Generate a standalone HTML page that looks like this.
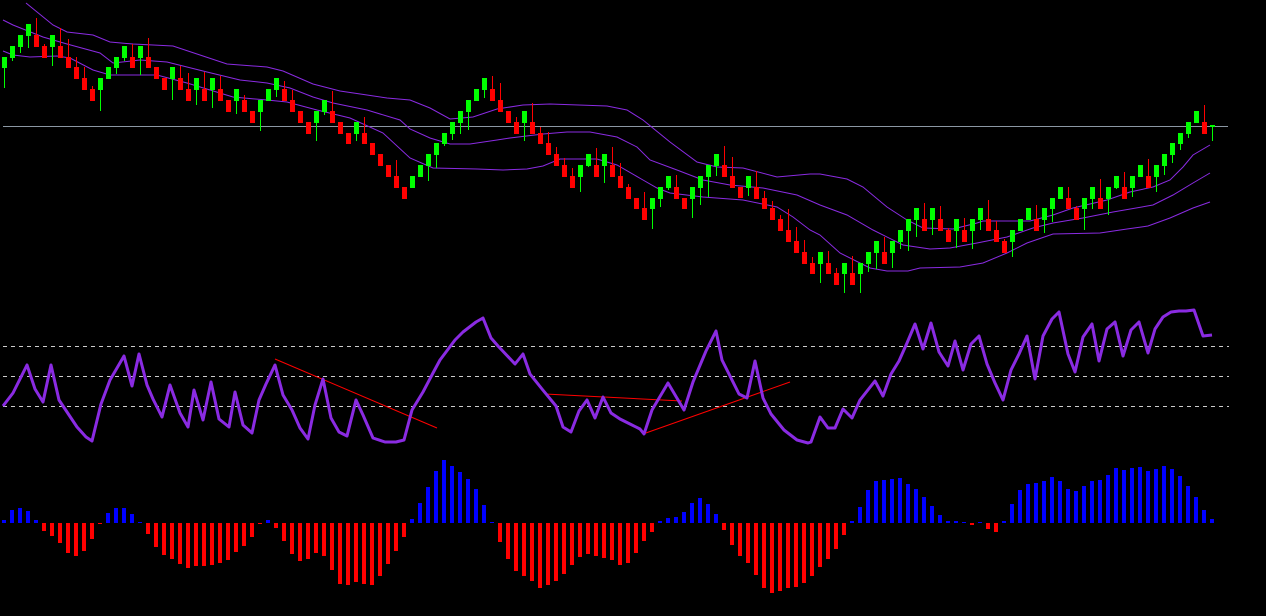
<!DOCTYPE html>
<html><head><meta charset="utf-8"><style>
html,body{margin:0;padding:0;background:#000;width:1266px;height:616px;overflow:hidden}
svg{display:block}
</style></head><body>
<svg id="s" width="1266" height="616" xmlns="http://www.w3.org/2000/svg" shape-rendering="crispEdges">
<rect width="1266" height="616" fill="#000"/>
<line x1="3" y1="126.5" x2="1228" y2="126.5" stroke="#8b97a3" stroke-width="1"/>
<g fill="none" stroke="#8a2be2" stroke-width="1" shape-rendering="auto">
<polyline points="26,3 53,25 67,32 93,35 110,42 133,44 173,46 200,55 227,64 267,67 283,71 313,84 340,91 367,95 387,98 410,100 430,108 450,119 473,117 497,109 523,105 550,104 607,106 627,110 643,120 670,142 697,162 717,167 743,168 777,177 810,174 820,174 847,179 863,187 887,207 907,220 923,228 953,229 977,223 983,221 1030,221 1053,215 1073,208 1107,200 1130,192 1153,187 1170,180 1183,167 1193,155 1210,145"/>
<polyline points="3,20 13,25 43,37 67,44 100,53 113,63 140,60 167,62 207,72 240,80 267,83 290,88 313,97 333,103 367,110 400,120 410,129 430,138 450,144 470,144 497,140 510,138 543,134 567,132 590,132 617,137 637,147 650,160 677,170 703,180 730,185 763,188 797,195 820,205 847,215 873,230 903,245 930,249 950,248 977,243 1007,237 1033,228 1053,223 1083,218 1113,212 1153,205 1173,195 1193,183 1210,173"/>
<polyline points="3,51 13,55 30,57 57,56 70,58 93,70 110,75 133,75 157,75 187,83 233,97 267,100 287,102 317,110 350,118 383,133 410,158 433,168 477,169 503,170 527,169 543,166 560,159 597,159 617,165 643,180 657,188 670,193 703,197 743,200 777,207 793,217 810,230 820,235 840,253 870,268 887,271 908,271 920,268 960,267 983,263 1007,253 1027,243 1053,234 1100,233 1127,229 1148,226 1170,218 1193,208 1210,202"/>
</g>
<g id="candles"></g>
<g stroke="#cccccc" stroke-width="1" stroke-dasharray="4,4">
<line x1="3" y1="346.5" x2="1229" y2="346.5"/>
<line x1="3" y1="376.5" x2="1229" y2="376.5"/>
<line x1="3" y1="406.5" x2="1229" y2="406.5"/>
</g>
<g stroke="#ff0000" stroke-width="1" shape-rendering="auto">
<line x1="275" y1="359" x2="437" y2="428"/>
<line x1="545" y1="394" x2="682" y2="401"/>
<line x1="643" y1="434" x2="790" y2="382"/>
</g>
<polyline fill="none" stroke="#8a2be2" stroke-width="3" stroke-linejoin="round" shape-rendering="auto" points="3,406 13,393 27,365 35,389 43,402 51,365 59,400 67,412 77,427 86,437 92,441 101,404 110,380 124,356 132,386 139,354 147,385 153,399 162,417 170,385 180,413 188,427 194,390 203,420 211,382 219,419 229,427 235,392 243,425 252,433 259,400 266,384 275,365 283,395 292,410 300,428 308,439 315,405 323,379 331,418 339,432 347,436 356,400 363,415 373,438 385,442 396,442 404,440 412,410 423,392 433,373 440,360 455,340 463,332 476,322 483,318 491,338 498,346 515,364 523,354 530,374 542,389 556,406 563,427 571,432 579,411 587,400 595,418 603,397 611,413 620,419 630,424 640,429 644,434 652,410 668,383 684,410 693,382 706,351 716,331 722,360 739,394 747,398 755,361 763,398 771,414 784,430 797,440 808,443 811,442 820,417 828,428 835,428 843,409 852,418 860,400 875,381 883,396 891,374 899,361 907,343 915,324 923,349 931,323 939,352 948,366 955,341 963,370 971,344 979,336 987,364 995,383 1003,400 1011,370 1019,354 1027,336 1035,379 1043,336 1052,319 1059,312 1068,354 1075,372 1083,337 1092,324 1099,361 1107,329 1115,322 1123,356 1131,330 1139,322 1148,353 1155,329 1163,317 1171,312 1179,311 1186,311 1194,310 1203,336 1212,335"/>
<g id="hist"></g>
</svg>
<script>
var NS="http://www.w3.org/2000/svg";
var C="g57,68,0,88|g46,58,0,61|g35,47,0,53|g24,36,0,48|r35,47,18,0|r46,58,44,0|g35,47,0,66|r46,58,28,0|r57,68,39,0|r67,79,57,0|r78,90,67,0|r89,101,86,0|g78,90,0,111|g67,79,0,0|g57,68,0,74|g46,58,0,61|r57,68,44,0|g46,58,0,75|r57,68,38,0|r67,79,0,0|r78,90,0,0|g67,79,0,100|r78,90,66,0|r89,101,73,0|g78,90,0,105|r89,101,72,0|g78,90,0,108|r89,101,76,0|r100,112,0,0|g89,101,0,114|r100,112,95,0|r111,123,0,0|g100,112,0,131|g89,101,0,0|g78,90,0,97|r89,101,81,0|r100,112,90,0|r111,123,0,0|r122,134,0,0|g111,123,0,141|g100,112,0,115|r111,123,91,0|r122,134,0,0|r133,144,0,0|g122,134,0,141|r133,144,117,0|r143,155,0,0|r154,166,0,0|r165,177,0,0|r176,188,160,0|r187,199,0,0|g176,188,0,0|g165,177,0,0|g154,166,0,181|g143,155,0,168|g133,144,0,146|g122,134,0,140|g111,123,0,134|g100,112,0,130|g89,101,0,0|g78,90,0,98|r89,101,76,0|r100,112,83,0|r111,123,0,0|r122,134,117,0|g111,123,0,141|r122,134,103,0|r133,144,127,0|r143,155,132,0|r154,166,147,0|r165,177,158,0|r176,188,168,0|g165,177,0,192|g154,166,0,167|r165,177,148,0|g154,166,0,183|r165,177,147,0|r176,188,163,0|r187,199,184,0|r198,209,0,0|r208,220,192,0|g198,209,0,229|g187,199,0,207|g176,188,0,190|r187,199,175,0|r198,209,0,0|g187,199,0,218|g176,188,0,205|g165,177,0,197|g154,166,0,176|r165,177,146,0|r176,188,157,0|r187,198,0,0|g176,188,0,196|r187,199,171,0|r198,209,191,0|r208,220,201,0|r219,231,215,0|r230,242,209,0|r241,253,227,0|r252,264,240,0|r263,274,257,0|g252,264,0,283|r263,274,251,0|r273,285,268,0|g263,274,0,293|r273,285,256,0|g263,274,0,293|g252,264,0,272|g241,253,0,269|r252,264,237,0|g241,253,0,268|g230,242,0,249|g219,231,0,251|g208,220,0,237|r219,231,203,0|g208,220,0,235|r219,231,206,0|r230,242,228,0|g219,231,0,248|r230,242,218,0|g219,231,0,249|g208,220,0,230|r219,231,200,0|r230,242,221,0|r241,253,239,0|g230,242,0,257|g219,231,0,0|g208,220,0,0|r219,231,205,0|g208,220,0,233|g198,209,0,222|g187,199,0,0|r198,209,187,0|r208,220,206,0|g198,209,0,230|g187,199,0,209|r198,209,179,0|g187,199,0,215|g176,188,0,189|r187,199,172,0|g176,188,0,197|g165,177,0,0|r176,188,159,0|g165,177,0,192|g154,166,0,175|g143,155,0,163|g133,144,0,150|g122,134,0,138|g111,123,0,0|r122,134,105,0|g125,127,125,141";
var H=[3,13,15,12,3,-8,-13,-20,-30,-33,-28,-16,-1,10,15,15,9,0,-11,-24,-32,-36,-41,-45,-43,-43,-42,-40,-37,-29,-23,-14,-1,3,-5,-18,-31,-38,-36,-30,-33,-47,-61,-62,-59,-61,-62,-53,-41,-28,-14,4,20,36,52,63,57,51,44,34,18,0,-19,-36,-48,-53,-58,-65,-62,-58,-51,-42,-34,-31,-33,-35,-37,-42,-40,-30,-18,-9,2,5,6,11,20,25,19,9,-7,-22,-33,-40,-52,-65,-70,-68,-65,-64,-60,-53,-44,-36,-26,-12,2,16,33,42,43,44,45,39,34,26,17,8,2,2,0,-2,0,-6,-9,2,19,33,39,40,42,46,42,34,32,37,42,43,48,55,53,55,56,52,54,57,54,47,37,26,13,4];
function el(n,a,p){var e=document.createElementNS(NS,n);for(var k in a)e.setAttribute(k,a[k]);p.appendChild(e);}
var cg=document.getElementById("candles"),hg=document.getElementById("hist");
C.split("|").forEach(function(s,i){
 var col=s[0]=="g"?"#00ff00":"#ff0000";var v=s.slice(1).split(",").map(Number);
 var x=4+8*i,t=v[0],b=v[1],wt=v[2]||t,wb=v[3]||b;
 el("rect",{x:x,y:wt,width:1,height:Math.max(1,wb-wt),fill:col},cg);
 el("rect",{x:x-2,y:t,width:5,height:Math.max(1,b-t),fill:col},cg);
});
var base=523;
H.forEach(function(h,i){
 var x=2+8*i;
 if(h>0)el("rect",{x:x,y:base-h,width:4,height:h,fill:"#0000ff"},hg);
 else if(h<0)el("rect",{x:x,y:base,width:4,height:-h,fill:"#ff0000"},hg);
 else el("rect",{x:x,y:base-1,width:4,height:1,fill:"#0000ff"},hg);
});
</script>
</body></html>
